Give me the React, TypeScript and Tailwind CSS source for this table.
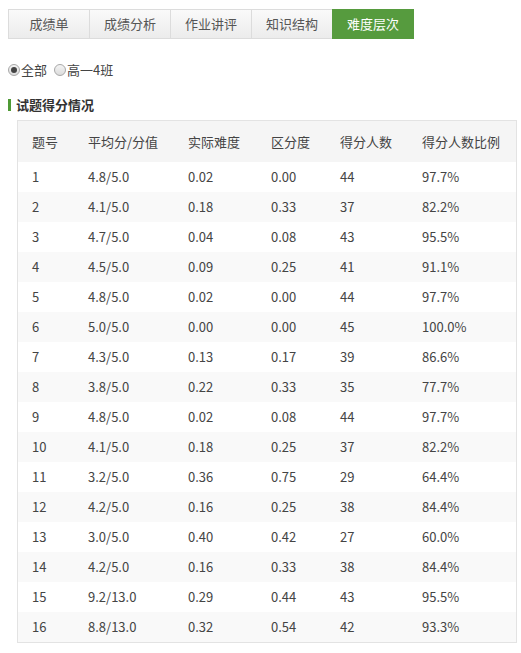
import React from 'react';

const tabs = ['成绩单', '成绩分析', '作业讲评', '知识结构', '难度层次'];

const rows: string[][] = [
  ['1', '4.8/5.0', '0.02', '0.00', '44', '97.7%'],
  ['2', '4.1/5.0', '0.18', '0.33', '37', '82.2%'],
  ['3', '4.7/5.0', '0.04', '0.08', '43', '95.5%'],
  ['4', '4.5/5.0', '0.09', '0.25', '41', '91.1%'],
  ['5', '4.8/5.0', '0.02', '0.00', '44', '97.7%'],
  ['6', '5.0/5.0', '0.00', '0.00', '45', '100.0%'],
  ['7', '4.3/5.0', '0.13', '0.17', '39', '86.6%'],
  ['8', '3.8/5.0', '0.22', '0.33', '35', '77.7%'],
  ['9', '4.8/5.0', '0.02', '0.08', '44', '97.7%'],
  ['10', '4.1/5.0', '0.18', '0.25', '37', '82.2%'],
  ['11', '3.2/5.0', '0.36', '0.75', '29', '64.4%'],
  ['12', '4.2/5.0', '0.16', '0.25', '38', '84.4%'],
  ['13', '3.0/5.0', '0.40', '0.42', '27', '60.0%'],
  ['14', '4.2/5.0', '0.16', '0.33', '38', '84.4%'],
  ['15', '9.2/13.0', '0.29', '0.44', '43', '95.5%'],
  ['16', '8.8/13.0', '0.32', '0.54', '42', '93.3%'],
];

const heads = ['题号', '平均分/分值', '实际难度', '区分度', '得分人数', '得分人数比例'];
const colW = ['w-[56px]', 'w-[100px]', 'w-[83px]', 'w-[69px]', 'w-[82px]', 'w-auto'];

function Radio({ checked, label }: { checked?: boolean; label: string }) {
  return (
    <label className="flex items-center mr-[7px]">
      <span className="w-[12px] h-[12px] rounded-full border border-[#a8a8a8] bg-gradient-to-b from-[#f4f4f4] to-[#dcdcdc] flex items-center justify-center mr-[1px]">
        {checked && <span className="w-[6px] h-[6px] rounded-full bg-[#444]" />}
      </span>
      <span>{label}</span>
    </label>
  );
}

export default function App() {
  return (
    <div
      className="w-[521px] h-[653px] bg-white text-[13px] text-[#333] pt-[9px] px-[8px]"
      style={{ fontFamily: '"Noto Sans CJK SC", "Noto Sans", sans-serif' }}
    >
      <div className="flex">
        {tabs.map((t, i) =>
          i === 4 ? (
            <div key={t} className="w-[82px] h-[30px] flex items-center justify-center bg-[#569b3e] text-white">
              {t}
            </div>
          ) : (
            <div
              key={t}
              className="w-[81px] h-[30px] flex items-center justify-center text-[#555] border-y border-l border-[#dcdcdc] bg-gradient-to-b from-[#fafafa] to-[#ececec]"
            >
              {t}
            </div>
          )
        )}
      </div>

      <div className="flex items-center mt-[21px] h-[20px] text-[#444]">
        <Radio checked label="全部" />
        <Radio label="高一4班" />
      </div>

      <div className="flex items-center mt-[18px] h-[14px]">
        <span className="w-[3px] h-[12px] bg-[#4f9a35] mr-[5px]" />
        <span className="font-bold text-[#333]">试题得分情况</span>
      </div>

      <div className="ml-[9px] mt-[8px] w-[500px] border border-[#e3e3e3]">
        <table className="w-full table-fixed border-collapse text-left">
          <thead>
            <tr className="bg-[#f5f5f5] h-[41px] text-[#444]">
              {heads.map((h, i) => (
                <th key={h} className={`font-normal pl-[14px] ${colW[i]}`}>
                  {h}
                </th>
              ))}
            </tr>
          </thead>
          <tbody>
            {rows.map((r, ri) => (
              <tr key={ri} className={`h-[30px] ${ri % 2 === 1 ? 'bg-[#f9f9f9]' : 'bg-white'}`}>
                {r.map((c, ci) => (
                  <td key={ci} className="pl-[14px] text-[#444]">
                    {c}
                  </td>
                ))}
              </tr>
            ))}
          </tbody>
        </table>
      </div>
    </div>
  );
}
